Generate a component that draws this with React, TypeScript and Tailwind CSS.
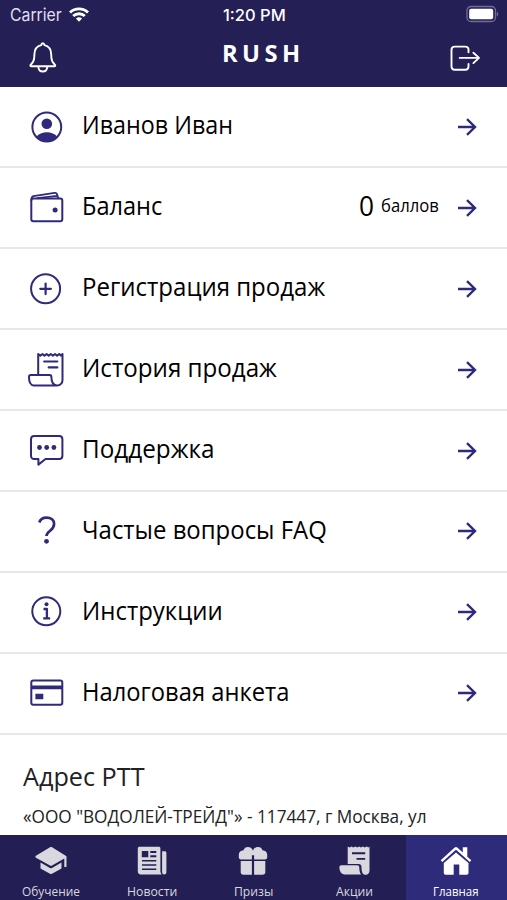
import React from 'react';

const menu = [
  { id: 'profile', label: 'Иванов Иван', width: 151 },
  { id: 'wallet', label: 'Баланс', width: 80 },
  { id: 'plus', label: 'Регистрация продаж', width: 243 },
  { id: 'receipt', label: 'История продаж', width: 195 },
  { id: 'chat', label: 'Поддержка', width: 133 },
  { id: 'question', label: 'Частые вопросы FAQ', width: 245 },
  { id: 'info', label: 'Инструкции', width: 141 },
  { id: 'card', label: 'Налоговая анкета', width: 207 },
];

const tabs = [
  { id: 'study', label: 'Обучение', width: 58 },
  { id: 'news', label: 'Новости', width: 50 },
  { id: 'gifts', label: 'Призы', width: 39 },
  { id: 'promo', label: 'Акции', width: 37 },
  { id: 'home', label: 'Главная', width: 46 },
];

// Squeezes a line of text to a fixed width, like the condensed face of the app
function FitText({ text, width, className = '' }: { text: string; width: number; className?: string }) {
  const ref = React.useRef<HTMLSpanElement>(null);
  const [scale, setScale] = React.useState(1);

  React.useLayoutEffect(() => {
    if (ref.current) setScale(width / ref.current.offsetWidth);
  }, [width]);

  return (
    <span className="block shrink-0" style={{ width }}>
      <span
        ref={ref}
        className={`inline-block origin-left whitespace-nowrap ${className}`}
        style={{ transform: `scaleX(${scale})` }}
      >
        {text}
      </span>
    </span>
  );
}

function MenuIcon({ id }: { id: string }) {
  return (
    <svg
      viewBox="0 0 36 36"
      className="h-9 w-9 shrink-0 text-[#2f2a7b]"
      fill="none"
      stroke="currentColor"
      strokeWidth="2"
      strokeLinecap="round"
      strokeLinejoin="round"
    >
      {id === 'profile' && (
        <>
          <circle cx="18.8" cy="18" r="14.4" />
          <circle cx="18.8" cy="14.8" r="5.3" fill="currentColor" stroke="none" />
          <path d="M8.2 28c2.400-3.200 6.400-4.700 10.600-4.700s8.200 1.500 10.600 4.700c-2.800 3-6.400 4.600-10.600 4.600S11 31 8.200 28z" fill="currentColor" stroke="none" />
        </>
      )}
      {id === 'wallet' && (
        <>
          <rect x="3.300" y="8.600" width="31" height="22.600" rx="2" />
          <path d="M3.300 10.500C3.200 8 3.600 6.600 5.500 6.200L26.500 2.900c1.300-.2 2.200.3 2.600 1.500l1.200 3.900M9.500 8.200 29 5.800" strokeWidth="1.800" />
          <circle cx="27.100" cy="20" r="2.500" fill="currentColor" stroke="none" />
        </>
      )}
      {id === 'plus' && (
        <>
          <circle cx="17.600" cy="17.800" r="14.500" />
          <path d="M17.600 12.500v10.600M12.300 17.800h10.600" strokeWidth="2.200" />
        </>
      )}
      {id === 'receipt' && (
        <>
          <path d="M10.200 23V2l2.100 1.800L14.400 2l2.100 1.800L18.600 2l2.100 1.800L22.800 2l2.100 1.800L27 2l2.100 1.800L31.200 2l1.700 1.600L34.500 2v26a5.300 5.300 0 0 1-5.300 5.500H6C2.600 33.500.9 30 1 25c0-1.300.6-1.900 1.900-1.900h18.600c1.300 0 1.900.7 1.900 1.900 0 4.500 1.500 8 5.300 8.500" />
          <path d="M16.200 9.500h13.100M20.700 15.400h8.600" strokeWidth="2.200" />
        </>
      )}
      {id === 'chat' && (
        <>
          <path d="M6.200 3h25c2 0 3.200 1.300 3.200 3.300v16.400c0 2-1.200 3.300-3.200 3.300H17.500l-7.100 5.600V26H6.200c-2 0-3.200-1.300-3.200-3.300V6.300C3 4.300 4.200 3 6.200 3z" />
          <g fill="currentColor" stroke="none">
            <circle cx="11.500" cy="14.500" r="2.400" />
            <circle cx="18.700" cy="14.500" r="2.400" />
            <circle cx="25.900" cy="14.500" r="2.400" />
          </g>
        </>
      )}
      {id === 'question' && (
        <>
          <path d="M11.300 9.500C12.300 6.300 15.200 4.600 18.500 4.600c4.600 0 7.600 2.600 7.600 6.300 0 3.200-1.800 4.900-4 6.800-2.300 1.800-3.600 2.900-3.600 5.200" strokeWidth="2.700" strokeLinecap="butt" />
          <circle cx="18.500" cy="28.300" r="2.400" fill="currentColor" stroke="none" />
        </>
      )}
      {id === 'info' && (
        <>
          <circle cx="18.300" cy="17.300" r="14" />
          <circle cx="18.500" cy="10.200" r="2" fill="currentColor" stroke="none" />
          <path d="M15.500 15h3.400v9M15.200 24.300h6.900" strokeWidth="2.300" strokeLinecap="butt" />
        </>
      )}
      {id === 'card' && (
        <>
          <rect x="3.300" y="5.600" width="31" height="24.200" rx="2" />
          <path d="M3 10.500h31.500v3.800H3zM7.400 18.800h7.900v5.500H7.400z" fill="currentColor" stroke="none" />
        </>
      )}
    </svg>
  );
}

function TabIcon({ id }: { id: string }) {
  return (
    <svg viewBox="0 0 34 32" className="h-8 w-[34px]" fill="currentColor">
      {id === 'study' && (
        <>
          <path d="M1.500 11 16 2.300c.7-.4 1.400-.4 2.100 0l14.400 9v10.800h-2.200v-8.600L18 20.500c-.7.400-1.400.4-2 0L1.500 12.600z" />
          <path d="M6.500 17.500 16 22.900c.7.400 1.300.4 2 0l9.500-5.400v6L18 28.800c-.7.400-1.300.4-2 0l-9.500-5.300z" />
        </>
      )}
      {id === 'news' && (
        <>
          <path fillRule="evenodd" d="M4.500 1.700h19.300c1 0 1.600.6 1.600 1.600v22.200c0 1.700.5 3 1.400 4H5.700c-1.700 0-2.900-1.200-2.900-2.900V3.300c0-1 .7-1.600 1.700-1.600zM6.800 6v6.300h6.500V6zM15.300 6v1.900h6V6zm0 4.200v2h6v-2zM7 15v1.600h14.300V15zm0 4.200v1.600h14.300v-1.600zm0 4.200V25h14.300v-1.600z" />
          <path d="M27.100 6.200h2.500c1.200 0 1.800.6 1.800 1.800v18.700c0 1.800-.8 2.800-2.100 2.800s-2.200-1-2.200-2.800z" />
        </>
      )}
      {id === 'gifts' && (
        <>
          <path d="M17 5.700C18 1 25.500 .5 26.500 5.300c2.800.2 4.700 1.900 4.700 4.500v2.400c0 1.400-.8 2.200-2.200 2.200H18.100v-4.200h-2.200v4.200H5c-1.400 0-2.200-.8-2.200-2.200V9.800c0-2.600 1.900-4.300 4.700-4.500C8.500.5 16 1 17 5.700z" />
          <path d="M4.700 16h11.200v13.700H7.500c-1.900 0-2.800-.9-2.800-2.500zM18.100 16h11.200v11.200c0 1.600-.9 2.500-2.800 2.500h-8.400z" />
        </>
      )}
      {id === 'promo' && (
        <>
          <path fillRule="evenodd" d="M9.700 19V1.500l1.900 1 1.900-1 1.900 1 1.900-1 1.900 1 1.900-1 1.900 1 1.900-1 1.900 1 1.900-1 1.900 1 .9-1v23.700c0 2.800-1.300 4.500-3.900 4.500-2.900 0-4.100-2.500-4.100-7.500 0-2.100-.9-3.200-3-3.200zM14 7.300v1.900h13.200V7.300zm4.500 5.600v1.900h8.700v-1.900z" />
          <path d="M3.500 20.200h15.600c1.500 0 2.200.8 2.200 2.300 0 3.400.6 5.700 2 7.100H7.700c-4.100 0-6.300-2.400-6.300-7.500 0-1.200.8-1.900 2.100-1.900z" />
        </>
      )}
      {id === 'home' && (
        <>
          <path d="m1.700 15.300 14-12.700c.9-.8 1.700-.8 2.600 0l5.500 5V2.200h4.500v9.600l4 3.500-1.500 1.700L17.700 5.300c-.5-.4-.9-.4-1.400 0L3.300 17z" />
          <path d="M17 7.500 29.500 18v9.800c0 1.300-.6 1.900-1.900 1.900h-7.300V19.400h-5.600v10.300H6.700c-1.300 0-1.900-.6-1.900-1.900V18z" />
        </>
      )}
    </svg>
  );
}

function ArrowIcon() {
  return (
    <svg viewBox="0 0 20 20" className="h-5 w-5 shrink-0 text-[#2f2a7b]" fill="none" stroke="currentColor" strokeWidth="2.400">
      <path d="M1 10h17M10 2.200l8 7.800-8 7.800" />
    </svg>
  );
}

function Header() {
  return (
    <header className="h-[86.500px] shrink-0 bg-[#241f55] text-white">
      <div className="grid h-[30px] grid-cols-3 items-center pl-[10px] pr-[8px] font-['Inter']">
        <div className="flex items-center gap-[7px] text-[#e0dfef]">
          <FitText text="Carrier" width={52} className="text-[17px] leading-[30px]" />
          <svg viewBox="0 0 20 15" className="relative -top-px h-[15px] w-5" fill="none" stroke="white" strokeWidth="2.900">
            <path d="M1 5.500a13 13 0 0 1 18 0M4.200 9a8.400 8.400 0 0 1 11.600 0" />
            <path d="M6.900 11.600a4.500 4.500 0 0 1 6.200 0L10 14.700z" fill="white" stroke="none" />
          </svg>
        </div>
        <div className="flex justify-center">
          <FitText text="1:20 PM" width={63} className="text-[16px] font-medium leading-[30px]" />
        </div>
        <svg viewBox="0 0 34 18" className="relative -top-px h-[18px] w-[34px] justify-self-end" fill="none">
          <rect x="2" y="1.500" width="28.500" height="15" rx="4" stroke="#716d97" strokeWidth="1.300" />
          <rect x="4.200" y="3.800" width="24" height="10.400" rx="2" fill="white" />
          <path d="M31.800 6.700c2 .9 2 3.900 0 4.700z" fill="#716d97" />
        </svg>
      </div>
      <div className="flex h-14 items-start justify-between pl-[28px] pr-[25px]">
        <svg viewBox="0 0 30 32" className="mt-[11px] h-8 w-[30px]" fill="none" stroke="white" strokeWidth="1.900" strokeLinejoin="round">
          <path d="M13.200 4.200c.2-1.300.8-2 1.600-2s1.400.7 1.600 2c4.200 1 6.700 4.300 6.800 9l.2 3.600c.2 3.200 1.300 5.200 3.500 7 .5.400.5 1.500-.2 1.500H2.900c-.7 0-.7-1.100-.2-1.500 2.200-1.800 3.300-3.800 3.500-7l.2-3.600c.1-4.700 2.600-8 6.800-9z" />
          <path d="M10.300 25.800c.3 3 2 4.700 4.500 4.700s4.200-1.700 4.500-4.700" />
        </svg>
        <FitText text="RUSH" width={83} className="ml-[9px] font-['Open_Sans'] text-[24px] font-bold leading-[45px] tracking-[4.500px]" />
        <svg viewBox="0 0 32 28" className="mt-[14px] h-7 w-8" fill="none" stroke="white" strokeWidth="1.900" strokeLinecap="round" strokeLinejoin="round">
          <path d="M18.500 8.300V5.800c0-2-1.200-3.200-3.200-3.200H4.700c-2 0-3.200 1.200-3.200 3.200v16.700c0 2 1.200 3.200 3.200 3.200h10.600c2 0 3.200-1.200 3.200-3.200V20M9.700 13.900h19.200M23.400 8.700l5.600 5.200-5.600 5.200" />
        </svg>
      </div>
    </header>
  );
}

export default function App() {
  return (
    <div className="flex h-[900px] w-[507px] flex-col overflow-hidden bg-white font-['Open_Sans',sans-serif]">
      <Header />
      <main className="flex-1 overflow-hidden pt-[1px]">
        {menu.map((item) => (
          <button
            key={item.id}
            className="flex h-[80.900px] w-full items-center border-b-2 border-[#e8e8e8] pl-[28px] pr-[30px] text-left text-black"
          >
            <MenuIcon id={item.id} />
            <span className="ml-[18px] flex-1 pb-[5px]">
              <FitText text={item.label} width={item.width} className="text-[25px] leading-9" />
            </span>
            {item.id === 'wallet' && (
              <span className="mr-[18px] flex items-center gap-[7px] pb-[5px]">
                <FitText text="0" width={15} className="text-[28px] leading-9" />
                <FitText text="баллов" width={58} className="text-[17.500px] leading-8" />
              </span>
            )}
            <ArrowIcon />
          </button>
        ))}
        <section className="px-[23px] pt-[23px] text-[#222]">
          <FitText text="Адрес РТТ" width={122} className="text-[25px] leading-9" />
          <FitText text={'«ООО "ВОДОЛЕЙ-ТРЕЙД"» - 117447, г Москва, ул'} width={404} className="mt-[10px] text-[17.500px] leading-6" />
        </section>
      </main>
      <nav className="grid h-[65.500px] shrink-0 grid-cols-5 bg-[#231e54] text-[#d9d8df]">
        {tabs.map((tab) => (
          <button
            key={tab.id}
            className={`flex flex-col items-center pt-[10px] ${tab.id === 'home' ? 'bg-[#2e2b7b] text-white' : ''}`}
          >
            <TabIcon id={tab.id} />
            <FitText text={tab.label} width={tab.width} className="mt-[6px] text-[12.500px] leading-[18px]" />
          </button>
        ))}
      </nav>
    </div>
  );
}
